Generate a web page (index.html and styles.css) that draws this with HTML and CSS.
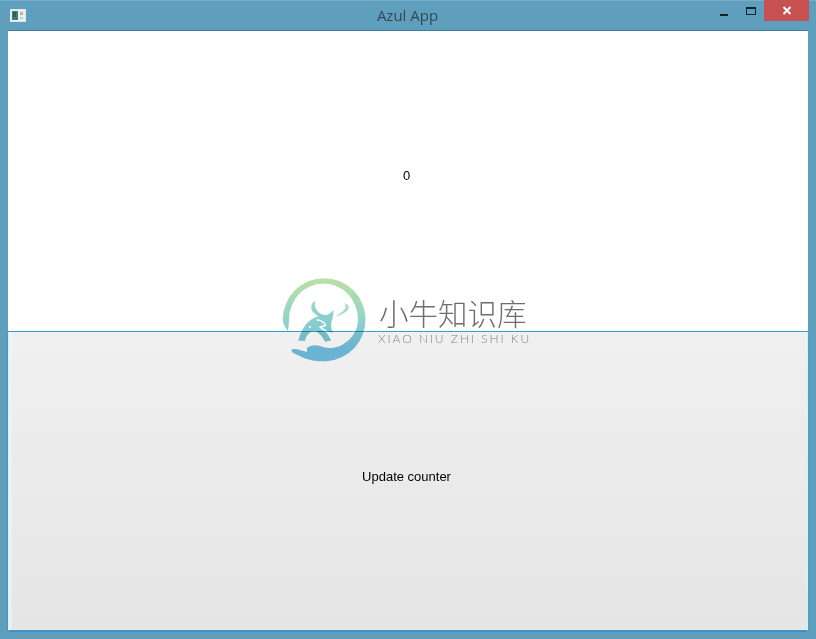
FILE: index.html
```html
<!DOCTYPE html>
<html lang="en">
<head>
<meta charset="utf-8">
<title>Azul App</title>
<link rel="stylesheet" href="styles.css">
</head>
<body>
<div class="window">
  <header class="titlebar">
    <svg class="app-icon" width="16" height="13" viewBox="0 0 16 13">
      <rect x="0.5" y="0.5" width="15" height="12" fill="#e8f0f2" stroke="#dfe8ec"/>
      <rect x="2" y="2" width="6" height="9" fill="#3f7f72"/>
      <rect x="3" y="3" width="3" height="5" fill="#2f5f5a"/>
      <rect x="10" y="3" width="3" height="3" fill="#c9a9ad"/>
      <rect x="10" y="8" width="3" height="2" fill="#b9d4d4"/>
    </svg>
    <div class="title">Azul App</div>
    <div class="controls">
      <span class="min"></span>
      <span class="max"></span>
      <span class="close">
        <svg width="10" height="9" viewBox="0 0 10 9"><path d="M1.5 1L8.5 8M8.5 1L1.5 8" stroke="#fff" stroke-width="2" fill="none"/></svg>
      </span>
    </div>
  </header>
  <main class="content">
    <div class="label">0</div>
    <button class="button">Update counter</button>
  </main>
</div>
<div class="watermark">
  <svg class="wm-logo" width="84" height="84" viewBox="0 0 84 84">
    <defs>
      <linearGradient id="ring" x1="0" y1="0" x2="0" y2="1">
        <stop offset="0" stop-color="#bbe0a4"/>
        <stop offset="0.45" stop-color="#94d6c4"/>
        <stop offset="0.85" stop-color="#72bfe0"/>
        <stop offset="1" stop-color="#72bfe0"/>
      </linearGradient>
      <linearGradient id="bull" x1="0" y1="0" x2="0" y2="1">
        <stop offset="0" stop-color="#96d8ca"/>
        <stop offset="1" stop-color="#7cc4d2"/>
      </linearGradient>
    </defs>
    <path fill="url(#ring)" d="M6 53C3 49 1 46 0.8 41.5A41.2 41.2 0 0 1 83.5 41.5A41.5 41.5 0 0 1 46 83C36 84 24 82 18 78C13 76 8 74 10 71.5C14 70 20 73 25 74L25 70C29 66 36 67 41 69C47 71 52 70 58 68C68 63 76 54 76 41.5A34.5 36 0 0 0 7 41.5C7 45 6.5 49 6 53Z"/>
    <path fill="url(#bull)" d="M33 23C29 25 28 30 31 34C33 36 35 37 36 38.7C28 40 20 48 16.3 62.7L23 62.7C24 58 27 54 31.3 53C36 53 40 58 43 63.7L49 62.5C47 58 45 55 43 53L51.3 54.7C48 50 49 44 50.7 40C51.5 37 51.7 35 51.3 32C49 35 46 37 43 37C39 37 34 33 33 28C33 26 33 24 33 23Z"/>
    <path fill="none" stroke="#fff" stroke-width="1.5" d="M34.7 42C38 42 42 44 43.5 47C42 49 39 48 38 49C40 51 43 52 45 54"/>
    <circle cx="28" cy="49" r="1" fill="#fff"/>
    <path fill="#a4dccb" d="M53 39C58 35 63 33 63.5 29C63.5 27 63 25 62 25C66 26 67.5 29 66.5 31C64 35 58 37 53 39Z"/>
  </svg>
  <div class="wm-text">
    <div class="wm-cn">小牛知识库</div>
    <div class="wm-en">XIAO NIU ZHI SHI KU</div>
  </div>
</div>
</body>
</html>
```
FILE: styles.css
```css
html, body {
  margin: 0;
  padding: 0;
  height: 100%;
  overflow: hidden;
}
body {
  position: relative;
  width: 816px;
  height: 639px;
  background: #5f9fbd;
  font-family: "Liberation Sans", Arial, sans-serif;
}
.window {
  display: flex;
  flex-direction: column;
  height: 639px;
  box-sizing: border-box;
  padding: 0 8px 8px;
  border-top: 1px solid #78aec6;
}
.titlebar {
  position: relative;
  display: flex;
  align-items: flex-start;
  justify-content: center;
  height: 29px;
  flex: none;
  box-sizing: border-box;
  padding-right: 1px;
}
.app-icon {
  position: absolute;
  left: 2px;
  top: 8px;
}
.title {
  font-family: "Open Sans", "Noto Sans", sans-serif;
  font-size: 15px;
  line-height: 20px;
  margin-top: 4px;
  color: #2f4a56;
}
.controls {
  position: absolute;
  right: -1px;
  top: -1px;
  display: flex;
  align-items: flex-start;
}
.min {
  width: 8px;
  height: 2px;
  background: #10222c;
  margin: 14px 18px 0 0;
}
.max {
  width: 10px;
  height: 8px;
  box-sizing: border-box;
  border: 1px solid #10222c;
  border-top-width: 2px;
  margin: 7px 8px 0 0;
}
.close {
  width: 45px;
  height: 21px;
  display: flex;
  align-items: center;
  justify-content: center;
  background: #c75050;
}
.content {
  flex: 1;
  display: flex;
  flex-direction: column;
  background: #fff;
  border-top: 1px solid #3f7f9c;
  min-height: 0;
}
.label {
  height: 301px;
  flex: none;
  box-sizing: border-box;
  padding: 0 3px 11px 0;
  display: flex;
  align-items: center;
  justify-content: center;
  font-size: 13px;
  color: #000;
  background: #fff;
  border-bottom: 1px solid #35a0c8;
}
.button {
  flex: 1;
  margin: 0;
  padding: 0 3px 10px 0;
  font-family: "Liberation Sans", Arial, sans-serif;
  font-size: 13px;
  color: #000;
  background: linear-gradient(#f0f0f0, #e5e5e5);
  border: 1px solid #3c96c4;
  border-top: 0;
  border-left-color: #d8eefa;
  border-right-color: #d8eefa;
  box-shadow: inset 3px 0 3px -1px #eef6fb, -1px 0 0 #4f95b5, 1px 0 0 #4b9cc4, 0 1px 0 #3f8fc6;
}
.watermark {
  position: absolute;
  left: 282px;
  top: 278px;
  display: flex;
  gap: 12px;
  mix-blend-mode: multiply;
}
.wm-logo {
  flex: none;
}
.wm-text {
  display: flex;
  flex-direction: column;
  align-items: flex-start;
  margin-top: 13px;
}
.wm-cn {
  font-family: "Noto Sans CJK SC", sans-serif;
  font-weight: 300;
  font-size: 29.5px;
  line-height: 42px;
  margin-left: 1px;
  color: #6e6e6e;
  white-space: nowrap;
}
.wm-en {
  font-family: "Lato", "Liberation Sans", sans-serif;
  font-weight: 300;
  font-size: 12px;
  line-height: 12px;
  letter-spacing: 1.95px;
  color: #8c8c8c;
  white-space: nowrap;
}
```
